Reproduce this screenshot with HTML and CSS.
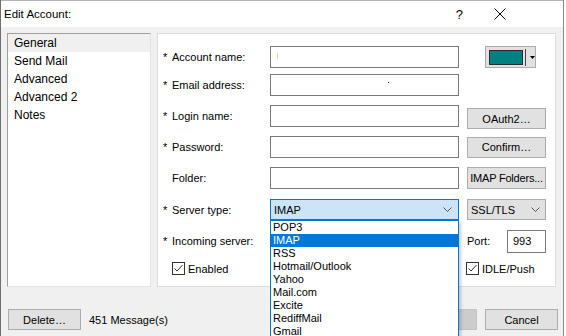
FILE: index.html
```html
<!DOCTYPE html>
<html lang="en">
<head>
    <meta charset="UTF-8">
    <title>Edit Account</title>
    <link rel="stylesheet" href="styles.css">
</head>
<body>
    <div class="window">
        <div class="titlebar">
            <span class="title">Edit Account:</span>
            <span class="help">?</span>
            <svg class="close" width="12" height="12" viewBox="0 0 12 12">
                <path d="M0.5 0.5L11.5 11.5M11.5 0.5L0.5 11.5" stroke="#000" stroke-width="1" fill="none"/>
            </svg>
        </div>

        <div class="main">
            <ul class="nav">
                <li class="selected">General</li>
                <li>Send Mail</li>
                <li>Advanced</li>
                <li>Advanced 2</li>
                <li>Notes</li>
            </ul>

            <div class="panel">
                <div class="row">
                    <span class="label"><i class="star">*</i>Account name:</span>
                    <div class="field"><span class="caret"></span></div>
                    <div class="side">
                        <div class="color-btn">
                            <span class="swatch"></span>
                            <span class="sep"></span>
                            <svg width="5" height="3" viewBox="0 0 5 3"><path d="M0 0H5L2.5 3Z" fill="#000"/></svg>
                        </div>
                    </div>
                </div>
                <div class="row row-tight">
                    <span class="label"><i class="star">*</i>Email address:</span>
                    <div class="field"><span class="dot"></span></div>
                </div>
                <div class="row">
                    <span class="label"><i class="star">*</i>Login name:</span>
                    <div class="field"></div>
                    <div class="side"><div class="button button-low">OAuth2…</div></div>
                </div>
                <div class="row">
                    <span class="label"><i class="star">*</i>Password:</span>
                    <div class="field"></div>
                    <div class="side"><div class="button">Confirm…</div></div>
                </div>
                <div class="row">
                    <span class="label"><i class="star"></i>Folder:</span>
                    <div class="field"></div>
                    <div class="side"><div class="button button-tall">IMAP Folders...</div></div>
                </div>
                <div class="row row-loose row-select">
                    <span class="label"><i class="star">*</i>Server type:</span>
                    <div class="select active">
                        <span>IMAP</span>
                        <svg width="9" height="5" viewBox="0 0 9 5"><path d="M0.5 0.5L4.5 4.5L8.5 0.5" stroke="#555" fill="none"/></svg>
                        <ul class="dropdown">
                            <li>POP3</li>
                            <li class="hot">IMAP</li>
                            <li>RSS</li>
                            <li>Hotmail/Outlook</li>
                            <li>Yahoo</li>
                            <li>Mail.com</li>
                            <li>Excite</li>
                            <li>RediffMail</li>
                            <li>Gmail</li>
                        </ul>
                    </div>
                    <div class="side">
                        <div class="select plain">
                            <span>SSL/TLS</span>
                            <svg width="9" height="5" viewBox="0 0 9 5"><path d="M0.5 0.5L4.5 4.5L8.5 0.5" stroke="#555" fill="none"/></svg>
                        </div>
                    </div>
                </div>
                <div class="row row-loose">
                    <span class="label"><i class="star">*</i>Incoming server:</span>
                    <div class="field"></div>
                    <div class="side port">
                        <span>Port:</span>
                        <div class="field port-field">993</div>
                    </div>
                </div>
                <div class="row row-loose row-checks">
                    <label class="check check-enabled">
                        <svg width="13" height="13" viewBox="0 0 13 13"><rect x="0.5" y="0.5" width="12" height="12" fill="#fff" stroke="#333"/><path d="M2.5 6.5L5 9L10.5 3" stroke="#333" fill="none"/></svg>
                        Enabled
                    </label>
                    <label class="check check-idle">
                        <svg width="13" height="13" viewBox="0 0 13 13"><rect x="0.5" y="0.5" width="12" height="12" fill="#fff" stroke="#333"/><path d="M2.5 6.5L5 9L10.5 3" stroke="#333" fill="none"/></svg>
                        IDLE/Push
                    </label>
                </div>
            </div>
        </div>

        <div class="footer">
            <div class="button">Delete…</div>
            <span class="count">451 Message(s)</span>
            <div class="button button-ok">OK</div>
            <div class="button button-cancel">Cancel</div>
        </div>
    </div>
</body>
</html>
```

FILE: styles.css
```css
* {
    box-sizing: border-box;
}

html, body {
    margin: 0;
    width: 566px;
    height: 336px;
    overflow: hidden;
}

body {
    background: #ffffff;
    font-family: "Liberation Sans", Arial, sans-serif;
    font-size: 11px;
    color: #000;
}

.window {
    width: 564px;
    height: 340px;
    background: #f0f0f0;
    border-left: 1px solid #6f6f6f;
    border-right: 1px solid #8a8a8a;
    display: flex;
    flex-direction: column;
}

/* title bar */
.titlebar {
    height: 27px;
    background: #fff;
    border-top: 1px solid #b4b4b4;
    display: flex;
    align-items: center;
    padding-left: 3px;
    font-size: 11.5px;
}

.help {
    margin-left: auto;
    font-size: 13px;
}

.close {
    margin-left: 31px;
    margin-right: 57px;
}

/* main area */
.main {
    display: flex;
    gap: 6px;
    padding: 6px 6px 0 6px;
}

.nav {
    list-style: none;
    margin: 0;
    padding: 0;
    width: 144px;
    height: 254px;
    background: #fff;
    border: 1px solid;
    border-color: #a0a0a0 #e3e3e3 #e3e3e3 #a0a0a0;
    font-size: 12px;
}

.nav li {
    height: 18px;
    line-height: 18px;
    padding-left: 6px;
}

.nav li.selected {
    background: #f0f0f0;
}

.panel {
    width: 399px;
    height: 254px;
    background: #fff;
    border: 1px solid #dcdcdc;
    padding: 12px 0 0 5px;
}

.row {
    display: flex;
    align-items: center;
    height: 22px;
    margin-top: 9px;
}

.row:first-child {
    margin-top: 0;
}

.row-tight {
    margin-top: 6px;
}

.row-loose {
    margin-top: 10px;
}

.row-select {
    height: 21px;
}

.label {
    width: 107px;
    display: flex;
    flex-shrink: 0;
}

.star {
    width: 9px;
    font-style: normal;
}

.field {
    width: 189px;
    height: 22px;
    background: #fff;
    border: 1px solid #7a7a7a;
    position: relative;
}

.caret {
    position: absolute;
    left: 6px;
    top: 6px;
    width: 1px;
    height: 6px;
    background: #f3d28c;
}

.dot {
    position: absolute;
    left: 117px;
    top: 7px;
    width: 1px;
    height: 1px;
    background: #333;
}

.side {
    margin-left: 8px;
    width: 79px;
    height: 100%;
    display: flex;
    align-items: center;
}

/* buttons */
.button {
    width: 79px;
    height: 21px;
    background: #e1e1e1;
    border: 1px solid #adadad;
    display: flex;
    align-items: center;
    justify-content: center;
    white-space: nowrap;
}

.button-low {
    margin-top: 5px;
}

.button-tall {
    height: 22px;
    letter-spacing: -0.2px;
}

.color-btn {
    margin-left: 18px;
    width: 51px;
    height: 22px;
    background: #e1e1e1;
    border: 1px solid #adadad;
    display: flex;
    align-items: center;
    padding-left: 3px;
}

.swatch {
    width: 34px;
    height: 15px;
    background: #008080;
    border: 1px solid #2b2b2b;
}

.sep {
    width: 1px;
    height: 17px;
    background: #444;
    margin: 0 4px 0 2px;
}

/* combo boxes */
.select {
    height: 21px;
    display: flex;
    align-items: center;
    justify-content: space-between;
    padding: 0 6px 0 3px;
    position: relative;
}

.select.active {
    width: 189px;
    background: #cce4f7;
    border: 1px solid #0078d7;
}

.select.plain {
    width: 79px;
    background: #e1e1e1;
    border: 1px solid #adadad;
    padding-right: 5px;
}

.dropdown {
    position: absolute;
    top: 20px;
    left: -1px;
    width: 189px;
    margin: 0;
    padding: 0;
    list-style: none;
    background: #fff;
    border: 1px solid #0078d7;
    box-shadow: 2px 2px 3px rgba(0, 0, 0, 0.2);
    z-index: 10;
}

.dropdown li {
    height: 13px;
    line-height: 13px;
    padding-left: 2px;
}

.dropdown li.hot {
    background: #0078d7;
    color: #fff;
}

/* port */
.port {
    justify-content: space-between;
}

.port-field {
    width: 39px;
    height: 23px;
    padding-left: 5px;
    display: flex;
    align-items: center;
}

/* checkboxes */
.row-checks {
    height: 13px;
}

.check {
    display: flex;
    align-items: center;
    gap: 3px;
}

.check-enabled {
    margin-left: 9px;
    width: 294px;
}

/* footer */
.footer {
    display: flex;
    align-items: center;
    padding: 22px 5px 0 7px;
}

.footer .button {
    width: 73px;
}

.count {
    margin-left: 8px;
}

.button-ok {
    margin-left: auto;
    background: #cccccc;
    border-color: #c4c4c4;
}

.button-cancel {
    margin-left: 8px;
}
```
